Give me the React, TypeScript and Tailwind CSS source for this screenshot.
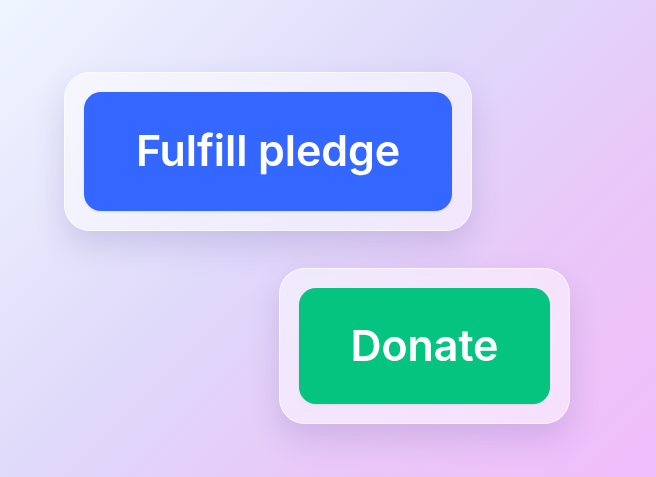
import * as React from "react";

// Glassy frame that sits around each action button
const Frame = ({ children }: { children: React.ReactNode }) => (
  <div className="rounded-[26px] border border-white/60 bg-white/50 p-[19px] shadow-[0_14px_30px_rgba(90,70,150,0.18)] backdrop-blur-sm">
    {children}
  </div>
);

export default function App() {
  return (
    <div
      className="flex h-[477px] w-[656px] flex-col overflow-hidden bg-[linear-gradient(135deg,#eff6ff_0%,#dfd8fa_45%,#e9c8f8_70%,#f1bdfb_100%)]"
      style={{ fontFamily: "Inter, 'Noto Sans', sans-serif" }}
    >
      <div className="ml-[64px] mt-[72px] self-start">
        <Frame>
          <button className="flex h-[119px] w-[368px] items-center justify-center rounded-[17px] bg-[#3467ff] pb-[2px] text-[43px] font-semibold tracking-[-0.1px] text-white shadow-[0_1px_2px_rgba(0,0,0,0.08)]">
            Fulfill pledge
          </button>
        </Frame>
      </div>
      <div className="ml-[279px] mt-[37px] self-start">
        <Frame>
          <button className="flex h-[116px] w-[251px] items-center justify-center rounded-[17px] bg-[#05c47f] pb-[2px] text-[43px] font-semibold tracking-[-0.1px] text-white shadow-[0_1px_2px_rgba(0,0,0,0.08)]">
            Donate
          </button>
        </Frame>
      </div>
    </div>
  );
}
